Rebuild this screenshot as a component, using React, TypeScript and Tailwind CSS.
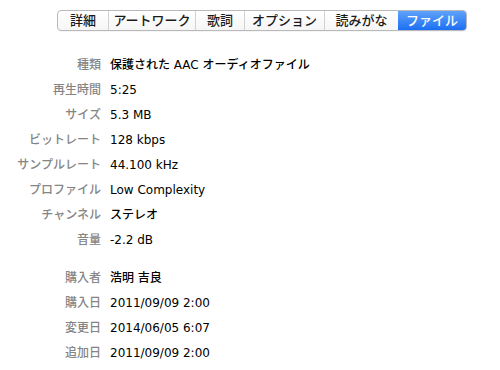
import React from "react";

const tabs = [
    { label: "詳細", w: "w-[50px]" },
    { label: "アートワーク", w: "w-[87px]" },
    { label: "歌詞", w: "w-[49px]" },
    { label: "オプション", w: "w-[80px]" },
    { label: "読みがな", w: "w-[74px]" },
    { label: "ファイル", w: "w-[68px]", active: true },
];

const mainRows = [
    ["種類", "保護された AAC オーディオファイル"],
    ["再生時間", "5:25"],
    ["サイズ", "5.3 MB"],
    ["ビットレート", "128 kbps"],
    ["サンプルレート", "44.100 kHz"],
    ["プロファイル", "Low Complexity"],
    ["チャンネル", "ステレオ"],
    ["音量", "-2.2 dB"],
];

const purchaseRows = [
    ["購入者", "浩明 吉良"],
    ["購入日", "2011/09/09 2:00"],
    ["変更日", "2014/06/05 6:07"],
    ["追加日", "2011/09/09 2:00"],
];

const Row = ({ label, value }: { label: string; value: string }) => (
    <div className="flex items-center h-[25px] font-medium">
        <div className="w-[101px] shrink-0 text-right text-[#858585]">{label}</div>
        <div className="pl-[9px] text-black">{value}</div>
    </div>
);

export default function App() {
    return (
        <div
            className="w-[500px] h-[370px] bg-white text-[12px] overflow-hidden"
            style={{ fontFamily: '"DejaVu Sans", "Noto Sans CJK JP", sans-serif' }}
        >
            <div className="pt-[10px] pl-[57px]">
                <div className="flex h-[21px] w-max rounded-[4px] border border-[#b9b9b9] overflow-hidden bg-gradient-to-b from-white to-[#f6f6f6] shadow-[0_1px_0_rgba(0,0,0,0.04)]">
                    {tabs.map((t, i) => (
                        <div
                            key={t.label}
                            className={
                                t.active
                                    ? `${t.w} flex items-center justify-center text-white font-medium bg-gradient-to-b from-[#5fa2fa] to-[#1b6ef3] text-[13px]`
                                    : `${t.w} flex items-center justify-center text-[#1a1a1a] font-medium text-[13px] ${i > 0 ? "border-l border-[#d2d2d2]" : ""}`
                            }
                        >
                            {t.label}
                        </div>
                    ))}
                </div>
            </div>

            <div className="pt-[21px]">
                {mainRows.map(([l, v]) => (
                    <Row key={l} label={l} value={v} />
                ))}
            </div>
            <div className="pt-[13px]">
                {purchaseRows.map(([l, v]) => (
                    <Row key={l} label={l} value={v} />
                ))}
            </div>
        </div>
    );
}
